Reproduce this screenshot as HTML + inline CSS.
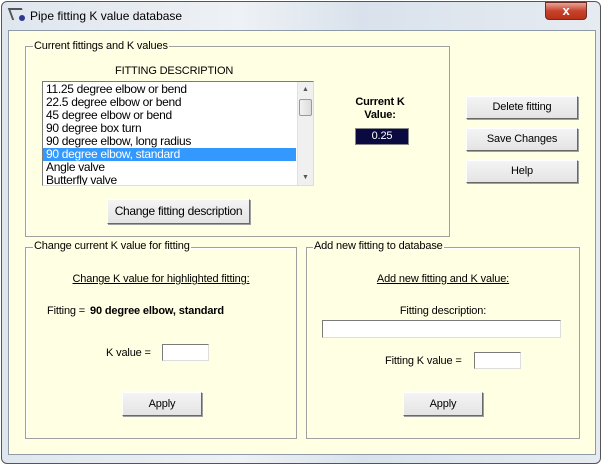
<!DOCTYPE html>
<html><head><style>
*{margin:0;padding:0;box-sizing:border-box}
body{width:603px;height:466px;background:#fff;font-family:"Liberation Sans",sans-serif;font-size:11px;letter-spacing:-0.15px;color:#000;position:relative;overflow:hidden}
.a{position:absolute}
.frame{left:1px;top:1px;width:600px;height:463px;border:1px solid #555;border-radius:6px;background:linear-gradient(90deg,#dfe6ee,#eef1f5 40%,#d9e2ec 60%,#e6ebf1);}
.client{left:8px;top:30px;width:588px;height:425px;background:#ffffe3;border:1px solid #8e9aa6}
.grp{border:1px solid #a0a0a0;box-shadow:1px 1px 0 #fff inset}
.lbl{background:#ffffe3;padding:0 1px;line-height:13px}
.btn{background:linear-gradient(#f4f4f4,#e4e4e4);border:1px solid #fff;border-right-color:#696969;border-bottom-color:#696969;box-shadow:1px 1px 0 #a0a0a0;text-align:center}
.inp{background:#fff;border:1px solid #7a7a7a;border-right-color:#ddd;border-bottom-color:#ddd}
.row{height:13px;line-height:13px;padding-left:3px;white-space:nowrap;font-size:12px;letter-spacing:-0.3px}
</style></head><body>
<div class="a frame"></div>
<div class="a" style="left:10px;top:8px;width:14px;height:12px;border-left:2px solid #555;border-top:2px solid #555;transform:skewX(20deg)"></div>
<div class="a" style="left:19px;top:15px;width:6px;height:6px;border-radius:3px;background:#2a3a90"></div>
<div class="a" style="left:30px;top:9px;font-size:12px;letter-spacing:0">Pipe fitting K value database</div>
<div class="a" style="left:545px;top:2px;width:42px;height:18px;border:1px solid #6b2d24;border-radius:0 0 4px 4px;background:linear-gradient(#e8a597,#c7422c 50%,#b93018);color:#fff;font-weight:bold;text-align:center;line-height:16px;font-size:13px">x</div>
<div class="a client"></div>

<div class="a grp" style="left:25px;top:46px;width:425px;height:191px"></div>
<div class="a lbl" style="left:33px;top:40px">Current fittings and K values</div>
<div class="a" style="left:115px;top:65px">FITTING DESCRIPTION</div>
<div class="a inp" style="left:42px;top:81px;width:272px;height:105px;overflow:hidden">
<div style="padding-top:1px;width:253px">
<div class="row">11.25 degree elbow or bend</div>
<div class="row">22.5 degree elbow or bend</div>
<div class="row">45 degree elbow or bend</div>
<div class="row">90 degree box turn</div>
<div class="row">90 degree elbow, long radius</div>
<div class="row" style="background:#3399ff;color:#fff">90 degree elbow, standard</div>
<div class="row">Angle valve</div>
<div class="row">Butterfly valve</div>
</div>
<div class="a" style="left:254px;top:0;width:17px;height:103px;background:#f0f0f0;border-left:1px solid #e0e0e0"></div>
<div class="a" style="left:256px;top:17px;width:13px;height:17px;background:linear-gradient(90deg,#f2f2f2,#dcdcdc);border:1px solid #999;border-radius:2px"></div>
<div class="a" style="left:259px;top:4px;font-size:7px;color:#555">▲</div>
<div class="a" style="left:259px;top:92px;font-size:7px;color:#555">▼</div>
</div>
<div class="a btn" style="left:107px;top:199px;width:143px;height:25px;line-height:23px;font-size:12px;letter-spacing:-0.3px">Change fitting description</div>
<div class="a" style="left:340px;top:96px;width:80px;text-align:center;font-weight:bold;line-height:13px">Current K<br>Value:</div>
<div class="a" style="left:355px;top:128px;width:54px;height:17px;background:#0a0a40;border:1px solid #888;color:#fff;text-align:center;line-height:15px">0.25</div>
<div class="a btn" style="left:466px;top:96px;width:112px;height:23px;line-height:21px">Delete fitting</div>
<div class="a btn" style="left:466px;top:128px;width:112px;height:23px;line-height:21px">Save Changes</div>
<div class="a btn" style="left:466px;top:160px;width:112px;height:23px;line-height:21px">Help</div>

<div class="a grp" style="left:25px;top:247px;width:272px;height:192px"></div>
<div class="a lbl" style="left:33px;top:240px">Change current K value for fitting</div>
<div class="a" style="left:25px;top:273px;width:272px;text-align:center;text-decoration:underline">Change K value for highlighted fitting:</div>
<div class="a" style="left:47px;top:305px">Fitting =</div>
<div class="a" style="left:90px;top:305px;font-weight:bold">90 degree elbow, standard</div>
<div class="a" style="left:106px;top:347px">K value =</div>
<div class="a inp" style="left:162px;top:344px;width:47px;height:17px"></div>
<div class="a btn" style="left:122px;top:392px;width:80px;height:24px;line-height:22px">Apply</div>

<div class="a grp" style="left:306px;top:247px;width:274px;height:192px"></div>
<div class="a lbl" style="left:313px;top:240px">Add new fitting to database</div>
<div class="a" style="left:306px;top:273px;width:274px;text-align:center;text-decoration:underline">Add new fitting and K value:</div>
<div class="a" style="left:306px;top:305px;width:274px;text-align:center">Fitting description:</div>
<div class="a inp" style="left:322px;top:320px;width:239px;height:18px"></div>
<div class="a" style="left:385px;top:355px">Fitting K value =</div>
<div class="a inp" style="left:474px;top:352px;width:47px;height:17px"></div>
<div class="a btn" style="left:403px;top:392px;width:80px;height:24px;line-height:22px">Apply</div>
</body></html>
